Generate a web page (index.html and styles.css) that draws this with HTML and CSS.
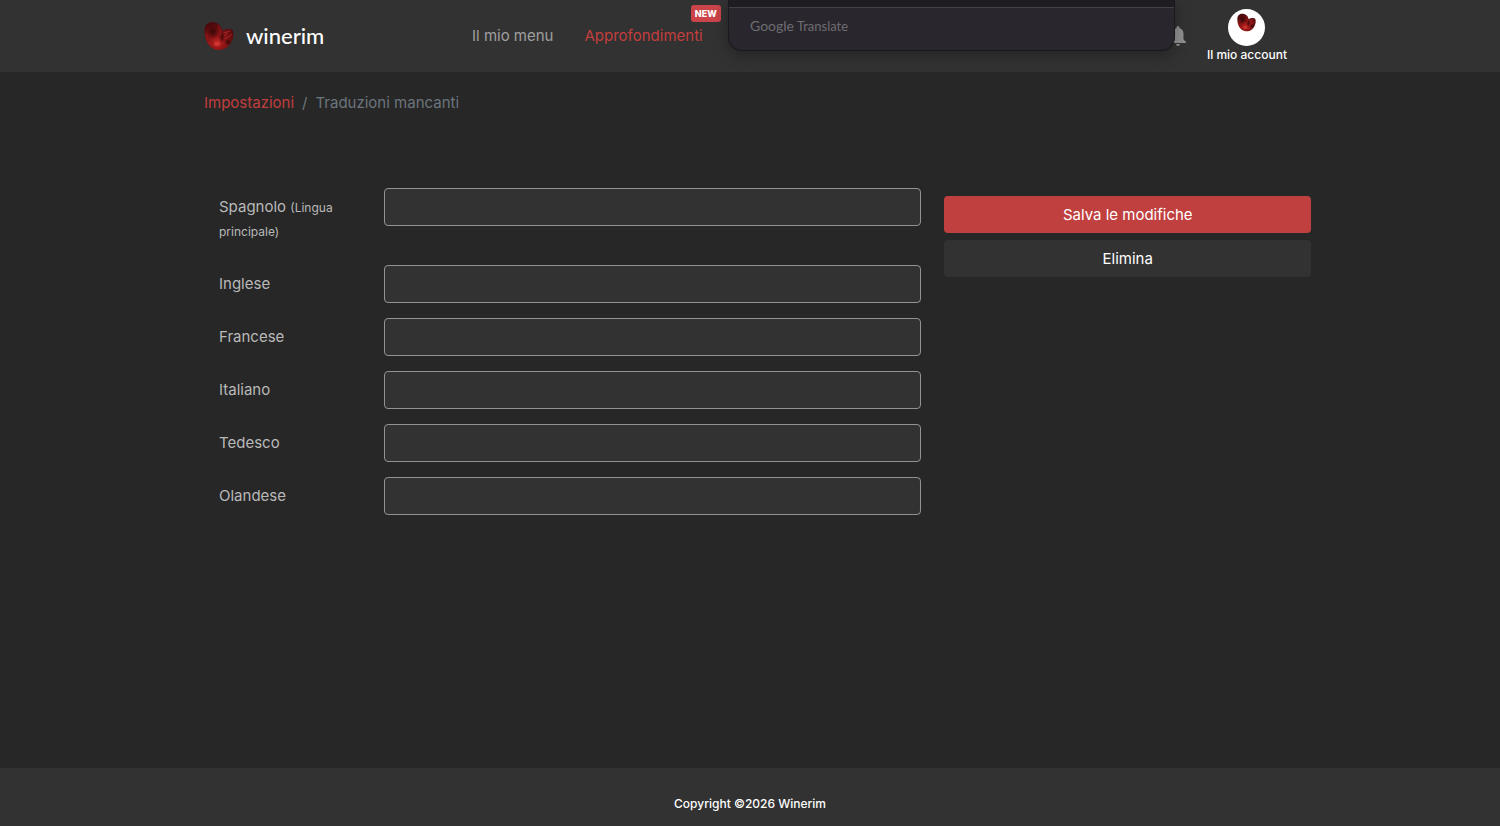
FILE: index.html
```html
<!DOCTYPE html>
<html lang="it">
<head>
<meta charset="utf-8">
<meta name="viewport" content="width=device-width, initial-scale=1">
<title>Winerim</title>
<link rel="stylesheet" href="styles.css">
</head>
<body>
<svg class="defs" aria-hidden="true">
  <defs>
    <radialGradient id="lobe" cx="44%" cy="74%" r="70%">
      <stop offset="0" stop-color="#c42a28"/>
      <stop offset=".3" stop-color="#981718"/>
      <stop offset=".7" stop-color="#6c0e10"/>
      <stop offset="1" stop-color="#4a090a"/>
    </radialGradient>
    <radialGradient id="shade">
      <stop offset="0" stop-color="#160203" stop-opacity=".65"/>
      <stop offset="1" stop-color="#160203" stop-opacity="0"/>
    </radialGradient>
    <symbol id="mark" viewBox="0 0 30 30">
      <path fill="url(#lobe)" d="M.5 9C.5 4 4 1 8.500 1C13.500 1 17.500 4.500 18.500 10C20 8.500 22 8 25.500 8C28.500 8 29.500 10 29.500 13C29.500 18 27.500 22 24 25.500C21.500 28 18 29 14 29C8 28.500 3.500 24 1.500 17.500C.8 15 .5 12 .5 9Z"/>
      <ellipse cx="9" cy="11" rx="6" ry="7" fill="url(#shade)"/>
      <ellipse cx="18" cy="16" rx="3" ry="6" fill="url(#shade)"/>
      <ellipse cx="24" cy="21" rx="4" ry="4" fill="url(#shade)"/>
      <path d="M2 12C3 19 5 23 9 25M14 4C16 7 16.500 11 17 15" fill="none" stroke="#c92825" stroke-opacity=".4"/>
      <path d="M19.500 12L27 9.500M20 15L24 11.500M21 18L28 13" fill="none" stroke="#e5363c" stroke-opacity=".5"/>
      <ellipse cx="13" cy="23" rx="3" ry="2" fill="#ff5a48" fill-opacity=".35"/>
    </symbol>
  </defs>
</svg>

<header class="header">
  <div class="container navbar">
    <a class="brand" href="#">
      <svg class="brand-mark" aria-hidden="true"><use href="#mark"/></svg>
      <span>winerim</span>
    </a>
    <nav class="nav">
      <a class="nav-link" href="#">Il mio menu</a>
      <a class="nav-link active" href="#">Approfondimenti<span class="badge">NEW</span></a>
    </nav>
    <div class="user">
      <button class="bell" type="button" aria-label="Notifiche">
        <svg viewBox="0 0 18 20" aria-hidden="true"><path fill="#929292" d="M9 0a1.500 1.500 0 0 0-1.500 1.500v.7C4.700 2.900 3.500 5.200 3.500 8v5.500L1 16v1h16v-1l-2.500-2.500V8c0-2.800-1.200-5.100-4-5.800v-.7A1.500 1.500 0 0 0 9 0zM7 18a2 2 0 0 0 4 0z"/></svg>
      </button>
      <a class="account" href="#">
        <span class="avatar"><svg aria-hidden="true"><use href="#mark"/></svg></span>
        <span>Il mio account</span>
      </a>
    </div>
  </div>
</header>

<aside class="translate"><div class="translate-foot"><span class="google">Google</span> Translate</div></aside>

<main class="container main">
  <nav class="breadcrumb" aria-label="Percorso">
    <a href="#">Impostazioni</a><span>/</span><span>Traduzioni mancanti</span>
  </nav>
  <form class="form">
    <div class="fields">
      <div class="row"><label for="es">Spagnolo <small>(Lingua principale)</small></label><input id="es" type="text"></div>
      <div class="row"><label for="en">Inglese</label><input id="en" type="text"></div>
      <div class="row"><label for="fr">Francese</label><input id="fr" type="text"></div>
      <div class="row"><label for="it">Italiano</label><input id="it" type="text"></div>
      <div class="row"><label for="de">Tedesco</label><input id="de" type="text"></div>
      <div class="row"><label for="nl">Olandese</label><input id="nl" type="text"></div>
    </div>
    <div class="actions">
      <button class="btn primary" type="submit">Salva le modifiche</button>
      <button class="btn" type="button">Elimina</button>
    </div>
  </form>
</main>

<footer class="footer">Copyright ©2026 Winerim</footer>
</body>
</html>
```

FILE: styles.css
```css
* { box-sizing: border-box; }

body {
  margin: 0;
  min-height: 100vh;
  display: flex;
  flex-direction: column;
  background: #272727;
  color: #b9b9b9;
  font: 15px/24px Inter, "Liberation Sans", sans-serif;
}

a { color: inherit; text-decoration: none; }

.defs { position: absolute; width: 0; height: 0; }

.container {
  width: 100%;
  max-width: 1122px;
  margin: 0 auto;
}

.header { background: #323232; }

.navbar {
  display: flex;
  align-items: center;
  min-height: 72px;
  padding: 0 24px 0 15px;
}

.brand {
  display: flex;
  align-items: center;
  gap: 12px;
  width: 268px;
  color: #fff;
  font: 500 22px/30px Lato, sans-serif;
}

.brand-mark { width: 30px; height: 30px; }

.nav { display: flex; gap: 31px; }

.nav-link { position: relative; color: #a0a0a0; }
.nav-link.active { color: #c23e3e; }

.badge {
  position: absolute;
  right: -18px;
  top: -19px;
  padding: 0 4px;
  border-radius: 3px;
  background: #cb444a;
  color: #fff;
  font-size: 9px;
  font-weight: 800;
  line-height: 17px;
}

.user {
  display: flex;
  align-items: center;
  gap: 20px;
  margin-left: auto;
}

.bell {
  display: flex;
  padding: 0;
  border: 0;
  background: none;
}

.bell svg { width: 18px; height: 20px; }

.account {
  display: flex;
  flex-direction: column;
  align-items: center;
  color: #fff;
  font-size: 12px;
  font-weight: 500;
  line-height: 18px;
}

.avatar {
  display: flex;
  justify-content: center;
  width: 37px;
  height: 37px;
  padding-top: 4px;
  border-radius: 50%;
  background: #fff;
}

.avatar svg { width: 19px; height: 19px; }

.translate {
  position: absolute;
  top: 0;
  left: 728px;
  width: 447px;
  padding-top: 7px;
  border: 1px solid #19181b;
  border-top: 0;
  border-radius: 0 0 14px 14px;
  background: #1e1b21;
  box-shadow: 0 4px 16px rgba(0, 0, 0, .3);
  overflow: hidden;
}

.translate-foot {
  padding: 6px 21px 12px;
  border-top: 1px solid #434147;
  background: #29262d;
  color: #6e6d72;
  font: 13px/24px Lato, sans-serif;
}

.google { font-size: 14px; }

.main { flex: 1; }

.breadcrumb {
  display: flex;
  gap: 8px;
  padding: 19px 15px 0;
  color: #6c757d;
}

.breadcrumb a { color: #c23e3e; }

.form {
  display: grid;
  grid-template-columns: 23fr 12fr;
  gap: 23px;
  padding: 73px 0 32px 30px;
}

.row {
  display: grid;
  grid-template-columns: 135px 1fr;
  align-items: start;
  gap: 30px;
  margin-bottom: 15px;
}

.row label { padding: 7px 0; }
.row small { font-size: 12px; line-height: 16px; }

.row input {
  width: 100%;
  height: 38px;
  padding: 6px 12px;
  border: 1px solid #909396;
  border-radius: 4px;
  background: #323232;
  color: #fff;
  font: inherit;
}

.actions {
  display: flex;
  flex-direction: column;
  gap: 7px;
  padding-top: 8px;
}

.btn {
  height: 37px;
  border: 0;
  border-radius: 4px;
  background: #323232;
  color: #fff;
  font: inherit;
}

.btn.primary { background: #c03f3f; }

.footer {
  padding: 24px 16px 10px;
  background: #323232;
  color: #fff;
  font-size: 12px;
  font-weight: 500;
  text-align: center;
}
```
